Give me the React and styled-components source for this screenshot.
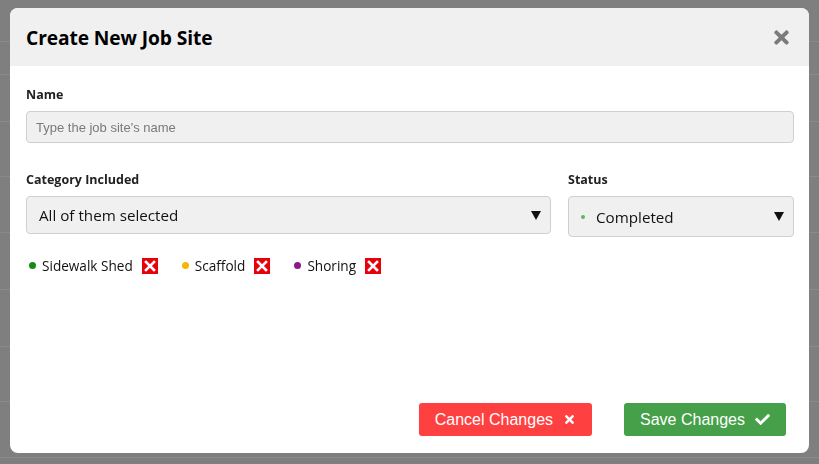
import React from 'react';
import styled, { createGlobalStyle } from 'styled-components';
import { FaTimes, FaCheck } from 'react-icons/fa';

const GlobalStyle = createGlobalStyle`
  html, body {
    margin: 0;
    padding: 0;
    background: #7f7f7f;
    font-family: "Open Sans", "Liberation Sans", sans-serif;
  }
`;

const rowHeights = [42, 33, 47, 55, 56, 57, 57, 55, 56, 40];

const Backdrop = styled.div`
  width: 819px;
  height: 464px;
  overflow: hidden;
  background: #7f7f7f;
`;

const BgRow = styled.div`
  height: ${p => p.$h}px;
  box-sizing: border-box;
  border-bottom: 1px solid #8a8a8a;
`;

const Modal = styled.div`
  position: fixed;
  top: 8px;
  left: 10px;
  width: 799px;
  height: 445px;
  background: #fff;
  border-radius: 8px;
  overflow: hidden;
  display: flex;
  flex-direction: column;
`;

const Header = styled.div`
  height: 58px;
  flex-shrink: 0;
  background: #f0f0f0;
  display: flex;
  align-items: center;
  justify-content: space-between;
  padding: 0 17px 0 16px;
`;

const Title = styled.h2`
  margin: 0;
  font-size: 19.2px;
  font-weight: 700;
  color: #000;
  letter-spacing: -0.1px;
`;

const CloseBtn = styled.button`
  border: 0;
  background: none;
  padding: 0;
  color: #7b7b7b;
  font-size: 21px;
  display: flex;
  cursor: pointer;
`;

const Body = styled.div`
  flex: 1;
  display: flex;
  flex-direction: column;
  padding: 20px 15px 17px 16px;
`;

const Label = styled.label`
  display: block;
  font-size: 12.5px;
  font-weight: 700;
  color: #222;
  line-height: 18px;
  margin-bottom: 7px;
`;

const TextInput = styled.input`
  box-sizing: border-box;
  width: 100%;
  height: 32px;
  background: #f0f0f0;
  border: 1px solid #cfcfcf;
  border-radius: 4px;
  padding: 0 9px;
  font-family: "Liberation Sans", Arial, sans-serif;
  font-size: 13px;
  &::placeholder {
    color: #7a7a7a;
  }
`;

const FieldRow = styled.div`
  display: flex;
  gap: 17px;
  margin-top: 28px;
`;

const Field = styled.div`
  flex: ${p => p.$grow};
  min-width: 0;
`;

const Select = styled.div`
  box-sizing: border-box;
  height: ${p => p.$h}px;
  background: #f0f0f0;
  border: 1px solid #cfcfcf;
  border-radius: 4px;
  display: flex;
  align-items: center;
  padding: 0 9px 0 12px;
  font-size: 15.2px;
  color: #111;
`;

const SelectText = styled.span`
  flex: 1;
  display: flex;
  align-items: center;
  gap: 11px;
`;

const Caret = styled.span`
  width: 0;
  height: 0;
  border-left: 5px solid transparent;
  border-right: 5px solid transparent;
  border-top: 9px solid #111;
`;

const Dot = styled.span`
  width: ${p => p.$size}px;
  height: ${p => p.$size}px;
  border-radius: 50%;
  background: ${p => p.$color};
  flex-shrink: 0;
`;

const Tags = styled.div`
  display: flex;
  align-items: center;
  gap: 24px;
  margin-top: 19px;
  padding-left: 3px;
`;

const Tag = styled.span`
  display: flex;
  align-items: center;
  font-size: 13.6px;
  color: #111;
  gap: 6px;
`;

const RemoveBox = styled.span`
  width: 16px;
  height: 16px;
  background: #e8000b;
  display: flex;
  align-items: center;
  justify-content: center;
  margin-left: 3px;
`;

const Footer = styled.div`
  margin-top: auto;
  display: flex;
  justify-content: flex-end;
  gap: 32px;
  padding-right: 8px;
`;

const Button = styled.button`
  height: 33px;
  border: 0;
  border-radius: 3px;
  background: ${p => p.$bg};
  color: #fff;
  font-family: "Liberation Sans", Arial, sans-serif;
  font-size: 16px;
  display: flex;
  align-items: center;
  gap: 10px;
  padding: 0 16px;
  cursor: pointer;
`;

const tags = [
  { name: 'Sidewalk Shed', color: '#188a18' },
  { name: 'Scaffold', color: '#f5b800' },
  { name: 'Shoring', color: '#8a1a8a' },
];

function WhiteX() {
  return (
    <svg width="12" height="12" viewBox="0 0 12 12">
      <path d="M2 2L10 10M10 2L2 10" stroke="#fff" strokeWidth="2.6" strokeLinecap="square" />
    </svg>
  );
}

export default function App() {
  return (
    <>
      <GlobalStyle />
      <Backdrop>
        {rowHeights.map((h, i) => (
          <BgRow key={i} $h={h} />
        ))}
      </Backdrop>
      <Modal>
        <Header>
          <Title>Create New Job Site</Title>
          <CloseBtn aria-label="Close">
            <FaTimes />
          </CloseBtn>
        </Header>
        <Body>
          <Label>Name</Label>
          <TextInput placeholder="Type the job site's name" />

          <FieldRow>
            <Field $grow={525}>
              <Label>Category Included</Label>
              <Select $h={38}>
                <SelectText>All of them selected</SelectText>
                <Caret />
              </Select>
            </Field>
            <Field $grow={226}>
              <Label>Status</Label>
              <Select $h={41}>
                <SelectText>
                  <Dot $size={4} $color="#5cb85c" />
                  Completed
                </SelectText>
                <Caret />
              </Select>
            </Field>
          </FieldRow>

          <Tags>
            {tags.map(t => (
              <Tag key={t.name}>
                <Dot $size={7} $color={t.color} />
                {t.name}
                <RemoveBox>
                  <WhiteX />
                </RemoveBox>
              </Tag>
            ))}
          </Tags>

          <Footer>
            <Button $bg="#ff4040">
              Cancel Changes
              <FaTimes size={13} />
            </Button>
            <Button $bg="#45a049">
              Save Changes
              <FaCheck size={15} />
            </Button>
          </Footer>
        </Body>
      </Modal>
    </>
  );
}
